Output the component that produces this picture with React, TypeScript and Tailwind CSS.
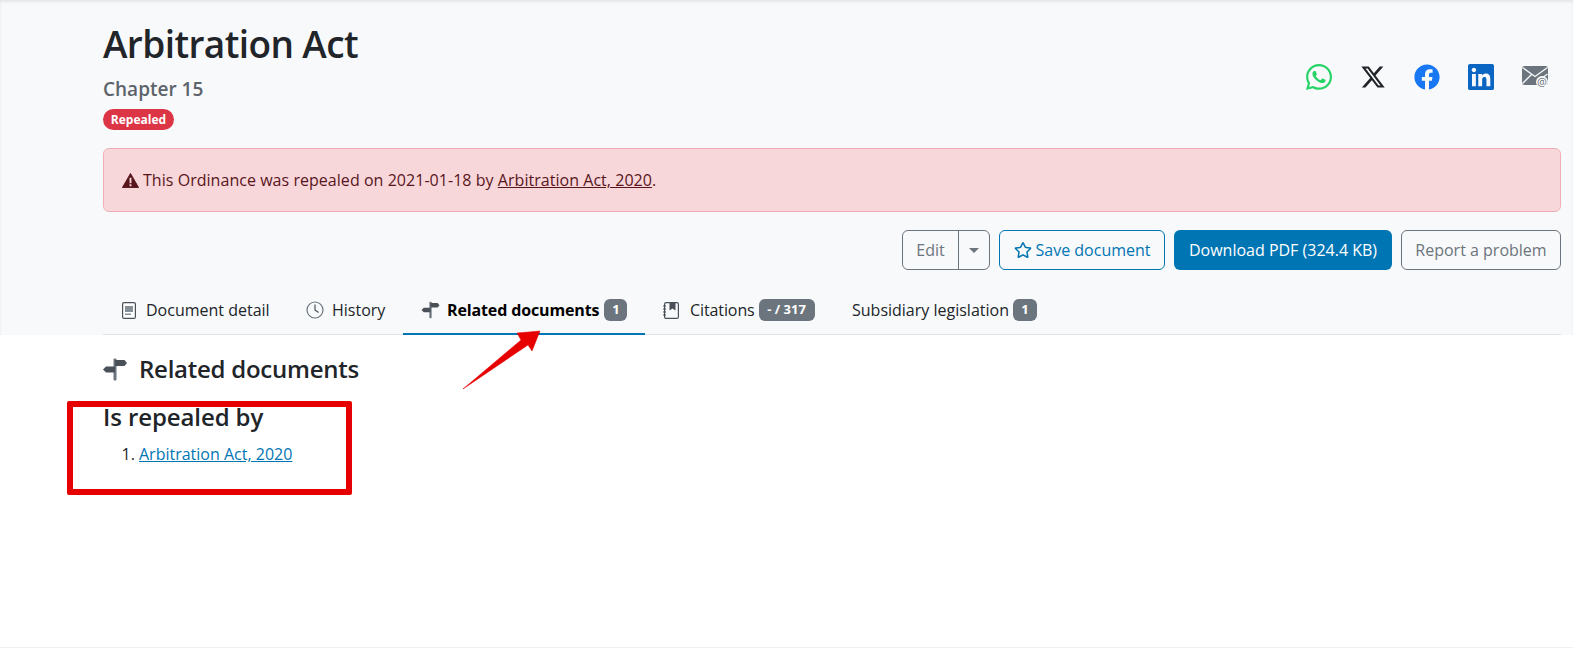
import { useState } from "react";
import { FaWhatsapp, FaFacebook, FaLinkedin, FaRegStar } from "react-icons/fa";
import { FaXTwitter } from "react-icons/fa6";

const font = { fontFamily: '"Open Sans", "Noto Sans", sans-serif' };

function SignsPost({ className }: { className?: string }) {
  return (
    <svg viewBox="0 0 24 24" className={className} fill="#495057">
      <rect x="10.5" y="1" width="3" height="22" rx="1" fill="#6c757d" />
      <path d="M12 2.5h9.5l2.5 3-2.5 3H12z" />
      <path d="M12 9H3L0 12l3 3h9z" />
    </svg>
  );
}

function DocIcon() {
  return (
    <svg viewBox="0 0 14 17" className="h-[17px] w-[14px]">
      <rect x="0.6" y="0.6" width="12.8" height="15.8" rx="1.5" fill="#fff" stroke="#495057" strokeWidth="1.2" />
      <path d="M3 4h8v6H3zM3 11.5h6V13H3z" fill="#868e96" />
    </svg>
  );
}

function ClockIcon() {
  return (
    <svg viewBox="0 0 18 18" className="h-[18px] w-[18px]" fill="none">
      <circle cx="9" cy="9" r="8" stroke="#6c757d" strokeWidth="1.2" />
      <path d="M9 3.5V9l3.5 2.5" stroke="#495057" strokeWidth="1.2" />
    </svg>
  );
}

function BookIcon() {
  return (
    <svg viewBox="0 0 16 17" className="h-[17px] w-[16px]" fill="none">
      <rect x="1.6" y="0.6" width="13.8" height="15.8" rx="1.5" stroke="#495057" strokeWidth="1.2" />
      <path d="M6.5 1h6v7.5l-3-2-3 2z" fill="#495057" />
      <path d="M0 4h3M0 7h3M0 10h3M0 13h3" stroke="#495057" strokeWidth="1" />
    </svg>
  );
}

function MailIcon() {
  return (
    <svg viewBox="0 0 26 22" className="h-[22px] w-[26px]">
      <rect x="0" y="0" width="26" height="19" rx="2.5" fill="#6c757d" />
      <path d="M0.5 1.5 13 10.5 25.5 1.5M0.5 17.5 9.5 8.5M25.5 8 20 12" stroke="#f8f9fa" strokeWidth="1.3" fill="none" />
      <circle cx="20" cy="16" r="6" fill="#f8f9fa" />
      <text x="20" y="20" fontSize="11" textAnchor="middle" fill="#6c757d" fontFamily="Open Sans">@</text>
    </svg>
  );
}

function Count({ children, className }: { children: string; className: string }) {
  return (
    <span className={`flex h-[22px] items-center justify-center rounded-[6px] bg-[#6c757d] text-[13px] font-bold text-white ${className}`}>
      {children}
    </span>
  );
}

export default function App() {
  const [tab] = useState("related");

  return (
    <div className="relative h-[648px] overflow-hidden border-b border-[#eef0f2] bg-white text-[16px] text-[#212529]" style={font}>
      <section className="h-[335px] bg-[#f8f9fa] pt-[2px] pl-[103px] pr-[12px] shadow-[inset_0_2px_3px_rgba(0,0,0,0.08)]">
        <div className="flex items-center justify-between">
          <div>
            <h1 className="mt-[18px] h-[48px] text-[37px] leading-[48px] font-semibold tracking-[-0.6px] whitespace-nowrap">Arbitration Act</h1>
            <div className="mt-[7px] h-[28px] text-[19px] leading-[28px] font-semibold text-[#5c636a]">Chapter 15</div>
            <span className="mt-[6px] flex h-[21px] w-[71px] items-center justify-center rounded-full bg-[#dc3545] text-[12px] font-bold text-white">Repealed</span>
          </div>
          <div className="mt-[21px] flex items-center gap-[28px] pr-[13px]">
            <FaWhatsapp className="h-[30px] w-[26px] text-[#25d366]" />
            <FaXTwitter className="h-[26px] w-[26px] text-[#212529]" />
            <FaFacebook className="h-[26px] w-[26px] text-[#1877f2]" />
            <FaLinkedin className="h-[30px] w-[26px] text-[#0a66c2]" />
            <MailIcon />
          </div>
        </div>

        <div className="mt-[18px] flex h-[64px] items-center gap-[4px] rounded-[6px] border border-[#f1aeb5] bg-[#f8d7da] pl-[18px] text-[#58151c]">
          <svg viewBox="0 0 18 16" className="h-[15px] w-[17px]">
            <path d="M9 0.5 17.6 15.5H0.4z" fill="#58151c" stroke="#58151c" strokeLinejoin="round" />
            <path d="M8 5h2v6H8zM8 12h2v2H8z" fill="#f8d7da" />
          </svg>
          <span className="tracking-[0.04px]">
            This Ordinance was repealed on 2021-01-18 by <a className="underline">Arbitration Act, 2020</a>.
          </span>
        </div>

        <div className="mt-[18px] flex h-[40px] justify-end gap-[9px] text-[#6c757d]">
          <div className="flex w-[88px] rounded-[6px] border border-[#6c757d]">
            <span className="flex w-[56px] items-center justify-center border-r border-[#6c757d]">Edit</span>
            <span className="flex flex-1 items-center justify-center">
              <span className="h-0 w-0 border-x-[5px] border-t-[5px] border-x-transparent border-t-[#6c757d]" />
            </span>
          </div>
          <div className="flex w-[166px] items-center justify-center gap-[4px] rounded-[6px] border border-[#0075b4] text-[#0075b4]">
            <FaRegStar className="h-[18px] w-[18px]" />
            Save document
          </div>
          <div className="flex w-[218px] items-center justify-center rounded-[6px] bg-[#0075b4] text-white">Download PDF (324.4 KB)</div>
          <div className="flex w-[160px] items-center justify-center rounded-[6px] border border-[#6c757d]">Report a problem</div>
        </div>

        <nav className="mt-[20px] flex h-[45px] border-b border-[#dee2e6]">
          <div className="flex w-[186px] items-center gap-[10px] pb-[4px] pl-[19px]">
            <DocIcon />
            Document detail
          </div>
          <div className="flex w-[114px] items-center gap-[8px] pb-[4px] pl-[17px]">
            <ClockIcon />
            History
          </div>
          <div className={`flex w-[242px] items-center gap-[5px] pb-[4px] pl-[18px] ${tab === "related" ? "h-[45px] border-b-2 border-[#0075b4]" : ""}`}>
            <SignsPost className="h-[18px] w-[19px]" />
            <span className="ml-[2px] font-bold tracking-[-0.13px] text-black">Related documents</span>
            <Count className="w-[23px]">1</Count>
          </div>
          <div className="flex w-[188px] items-center gap-[3px] pb-[4px] pl-[18px]">
            <BookIcon />
            <span className="ml-[8px] tracking-[-0.1px]">Citations</span>
            <Count className="ml-[1px] w-[56px]">- / 317</Count>
          </div>
          <div className="flex items-center gap-[4px] pb-[4px] pl-[19px]">
            Subsidiary legislation
            <Count className="w-[24px]">1</Count>
          </div>
        </nav>
      </section>

      <main className="pl-[103px]">
        <div className="mt-[19px] flex h-[30px] items-center gap-[12px]">
          <SignsPost className="h-[25px] w-[24px]" />
          <h2 className="text-[24px] font-semibold tracking-[-0.25px]">Related documents</h2>
        </div>
        <h3 className="mt-[18px] h-[30px] text-[24px] leading-[30px] font-semibold tracking-[-0.1px]">Is repealed by</h3>
        <ol className="mt-[10px] list-decimal pl-[36px]">
          <li><a className="text-[#0075b4] underline">Arbitration Act, 2020</a></li>
        </ol>
      </main>

      {/* annotation layer */}
      <div className="absolute left-[67px] top-[401px] h-[94px] w-[285px] rounded-[2px] border-[6px] border-[#e60000]" />
      <svg className="absolute left-[455px] top-[325px] h-[70px] w-[90px]" viewBox="0 0 90 70">
        <path d="M8 64 L66 15 L62 8 L85 6 L77 26 L73 20 Z" fill="#e60000" stroke="#e60000" strokeWidth="0.5" strokeLinejoin="round" />
      </svg>
    </div>
  );
}
